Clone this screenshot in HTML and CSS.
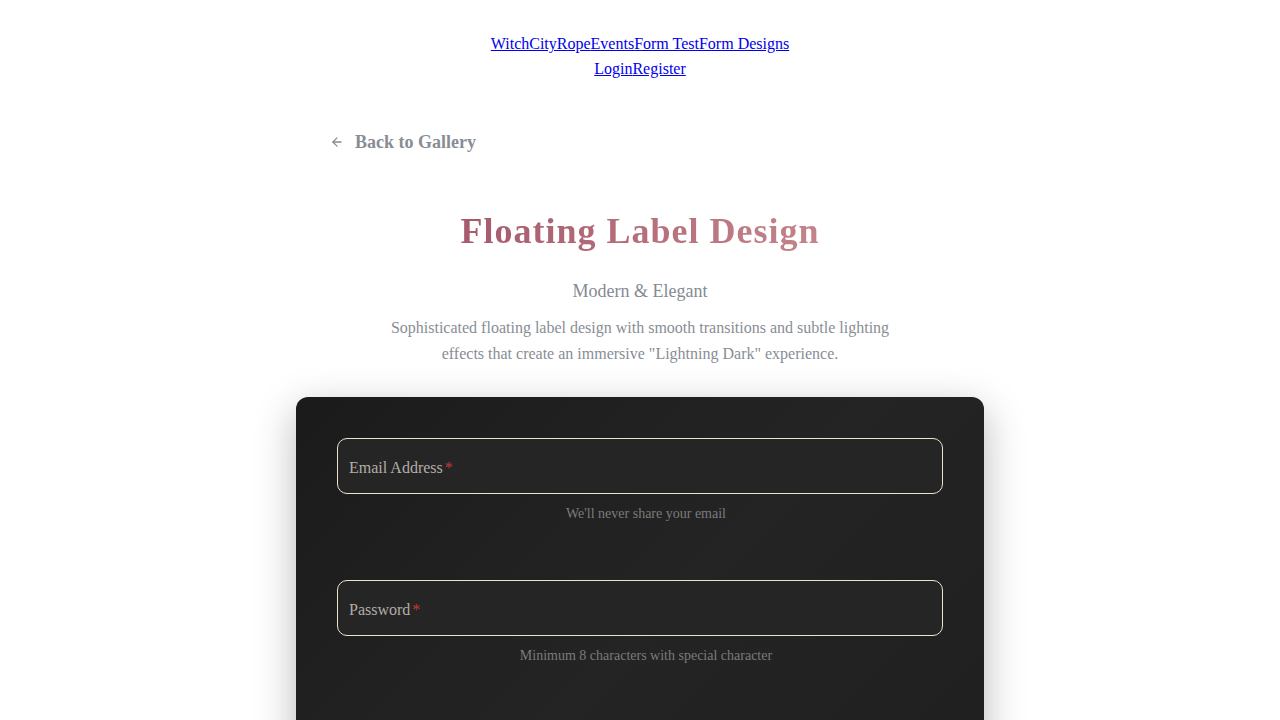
FILE: index.html
```html
<!DOCTYPE html>
<html lang="en">
<head>
<meta charset="utf-8">
<title>Floating Label Design</title>
<link rel="stylesheet" href="styles.css">
</head>
<body>
<nav class="nav">
  <div class="nav-row"><a href="#">WitchCityRope</a><a href="#">Events</a><a href="#">Form Test</a><a href="#">Form Designs</a></div>
  <div class="nav-row"><a href="#">Login</a><a href="#">Register</a></div>
</nav>
<main class="page">
  <a class="back" href="#">
    <svg class="back-icon" width="14" height="14" viewBox="0 0 24 24" fill="none" stroke="currentColor" stroke-width="2.2" stroke-linecap="round" stroke-linejoin="round"><path d="M19 12H5"/><path d="M12 19l-7-7 7-7"/></svg>
    <span>Back to Gallery</span>
  </a>
  <header class="hero">
    <h1 class="title">Floating Label Design</h1>
    <p class="subtitle">Modern &amp; Elegant</p>
    <p class="desc">Sophisticated floating label design with smooth transitions and subtle lighting effects that create an immersive "Lightning Dark" experience.</p>
  </header>
  <section class="card">
    <div class="field">
      <div class="input-box"><span class="label">Email Address</span><span class="req">*</span></div>
      <p class="help">We'll never share your email</p>
    </div>
    <div class="field">
      <div class="input-box"><span class="label">Password</span><span class="req">*</span></div>
      <p class="help">Minimum 8 characters with special character</p>
    </div>
  </section>
</main>
</body>
</html>
```
FILE: styles.css
```css
html, body {
  margin: 0;
  padding: 0;
  background: #ffffff;
  font-family: "Liberation Serif", "Times New Roman", serif;
}
.nav {
  padding-top: 35px;
  display: flex;
  flex-direction: column;
  align-items: center;
  gap: 7px;
  font-size: 16px;
  line-height: 18px;
}
.nav-row a {
  color: #0000ee;
  text-decoration: underline;
}
.page {
  width: 688px;
  margin: 0 auto;
  padding-top: 52px;
}
.back {
  display: inline-flex;
  align-items: center;
  gap: 11px;
  margin-left: 34px;
  color: #888d95;
  font-weight: bold;
  font-size: 18px;
  line-height: 24px;
  text-decoration: none;
}
.back-icon {
  color: #888d95;
}
.hero {
  text-align: center;
  padding-top: 55px;
}
.title {
  margin: 0;
  font-size: 36px;
  line-height: 44px;
  font-weight: bold;
  letter-spacing: 1px;
  background: linear-gradient(90deg, #a65a6c 0%, #c4848a 100%);
  -webkit-background-clip: text;
  background-clip: text;
  color: transparent;
  display: inline-block;
}
.subtitle {
  margin: 26px 0 0;
  font-size: 18px;
  line-height: 24px;
  color: #858a93;
}
.desc {
  margin: 12px auto 0;
  max-width: 510px;
  font-size: 16px;
  line-height: 26px;
  color: #888d95;
}
.card {
  margin-top: 30px;
  background: linear-gradient(135deg, #1b1b1b 0%, #242424 55%, #1f1f1f 100%);
  border-radius: 12px;
  padding: 41px 41px 40px;
  box-shadow: 0 12px 40px rgba(0, 0, 0, 0.28);
}
.field {
  margin-bottom: 58px;
}
.input-box {
  height: 54px;
  box-sizing: content-box;
  border: 1px solid #ece3cc;
  border-radius: 10px;
  background: #252525;
  display: flex;
  align-items: center;
  padding: 0 11px;
  font-size: 16px;
  color: #b1aea7;
}
.label {
  position: relative;
  top: 2px;
}
.req {
  position: relative;
  top: 2px;
  color: #c23a3a;
  margin-left: 2px;
}
.help {
  margin: 12px 0 0;
  padding-left: 12px;
  text-align: center;
  font-size: 14px;
  line-height: 16px;
  color: #7b7b7b;
}
```
